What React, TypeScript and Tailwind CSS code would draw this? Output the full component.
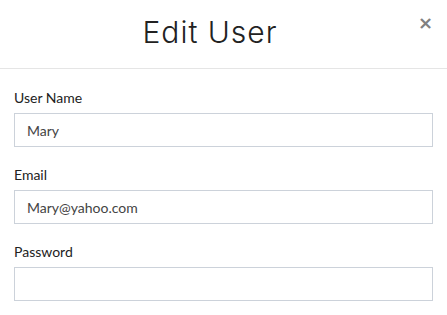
import React from "react";

export default function App() {
  return (
    <div className="w-[447px] h-[315px] bg-white overflow-hidden" style={{ fontFamily: "Lato, 'Noto Sans', sans-serif" }}>
      <div className="relative h-[69px] border-b border-[#e5e5e5] flex items-center justify-center pr-[27px]">
        <h1 className="text-[30px] tracking-[1px] text-[#222] leading-none pb-[5px]" style={{ fontFamily: "Inter, Lato, sans-serif", fontWeight: 300 }}>
          Edit User
        </h1>
        <button className="absolute right-[14px] top-[14px] text-[18px] font-bold leading-none text-[#808080]" style={{ fontFamily: "'DejaVu Sans', sans-serif" }}>
          ×
        </button>
      </div>
      <div className="px-[14px] pt-[19px] flex flex-col gap-[18px]">
        {[
          { label: "User Name", value: "Mary" },
          { label: "Email", value: "Mary@yahoo.com" },
          { label: "Password", value: "" },
        ].map((f) => (
          <div key={f.label} className="flex flex-col gap-[5px]">
            <label className="text-[14px] leading-[20px] text-[#222]">{f.label}</label>
            <input
              readOnly
              type={f.label === "Password" ? "password" : "text"}
              value={f.value}
              className="h-[34px] w-[419px] border border-[#ccd2da] px-[12px] text-[14px] text-[#444] outline-none"
              style={{ fontFamily: "Lato, sans-serif" }}
            />
          </div>
        ))}
      </div>
    </div>
  );
}
